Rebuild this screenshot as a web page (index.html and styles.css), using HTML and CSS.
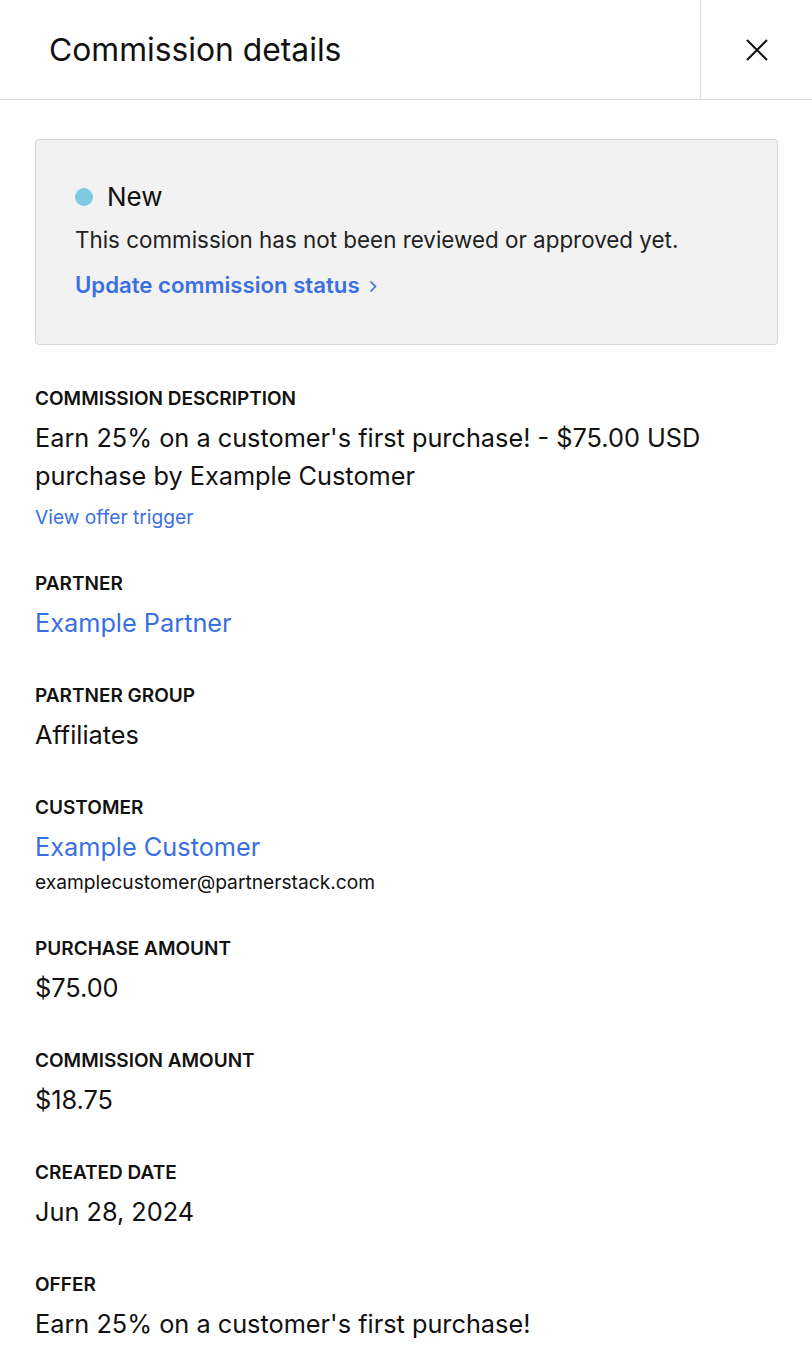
FILE: index.html
```html
<!DOCTYPE html>
<html lang="en">
<head>
<meta charset="utf-8">
<title>Commission details</title>
<link rel="stylesheet" href="styles.css">
</head>
<body>
<div class="panel">
  <header class="header">
    <h1 class="title">Commission details</h1>
    <button class="close" aria-label="Close">
      <svg width="22" height="22" viewBox="0 0 22 22"><path d="M1 1 L21 21 M21 1 L1 21" stroke="#111" stroke-width="2" fill="none"/></svg>
    </button>
  </header>
  <main class="content">
    <div class="status-card">
      <div class="status-row"><span class="dot"></span><span class="status-name">New</span></div>
      <p class="status-desc">This commission has not been reviewed or approved yet.</p>
      <a class="status-link" href="#">Update commission status
        <svg class="chev" width="8" height="13" viewBox="0 0 8 13"><path d="M1.5 1.5 L6.5 6.5 L1.5 11.5" stroke="#3a6fe2" stroke-width="1.6" fill="none"/></svg>
      </a>
    </div>

    <section class="field">
      <div class="label">COMMISSION DESCRIPTION</div>
      <div class="value">Earn 25% on a customer's first purchase! - $75.00 USD purchase by Example Customer</div>
      <a class="small-link" href="#">View offer trigger</a>
    </section>

    <section class="field">
      <div class="label">PARTNER</div>
      <a class="value link" href="#">Example Partner</a>
    </section>

    <section class="field">
      <div class="label">PARTNER GROUP</div>
      <div class="value">Affiliates</div>
    </section>

    <section class="field">
      <div class="label">CUSTOMER</div>
      <a class="value link" href="#">Example Customer</a>
      <div class="email">examplecustomer@partnerstack.com</div>
    </section>

    <section class="field">
      <div class="label">PURCHASE AMOUNT</div>
      <div class="value">$75.00</div>
    </section>

    <section class="field">
      <div class="label">COMMISSION AMOUNT</div>
      <div class="value">$18.75</div>
    </section>

    <section class="field">
      <div class="label">CREATED DATE</div>
      <div class="value">Jun 28, 2024</div>
    </section>

    <section class="field">
      <div class="label">OFFER</div>
      <div class="value">Earn 25% on a customer's first purchase!</div>
    </section>
  </main>
</div>
</body>
</html>
```
FILE: styles.css
```css
* { box-sizing: border-box; }
html, body { margin: 0; padding: 0; background: #fff; }
body {
  font-family: Inter, "Noto Sans", "Liberation Sans", sans-serif;
  color: #111;
}
.panel { width: 812px; min-height: 1366px; overflow: hidden; }
.header {
  display: flex;
  height: 100px;
  border-bottom: 1px solid #dcdcdc;
}
.title {
  flex: 1;
  margin: 0;
  padding-left: 49px;
  font-size: 31.8px;
  font-weight: 400;
  line-height: 99px;
  color: #111;
}
.close {
  width: 112px;
  border: 0;
  border-left: 1px solid #dcdcdc;
  background: #fff;
  padding: 0;
  display: flex;
  align-items: center;
  justify-content: center;
}
.content { padding: 39px 34px 0 35px; }
.status-card {
  background: #f2f2f2;
  border: 1px solid #d6d6d8;
  border-radius: 4px;
  padding: 41px 39px 45px;
  margin-bottom: 41px;
}
.status-row { display: flex; align-items: center; height: 32px; }
.dot {
  width: 18px; height: 18px; border-radius: 50%;
  background: #7ecae3;
  margin-right: 14px;
}
.status-name { font-size: 26px; line-height: 32px; }
.status-desc {
  margin: 13px 0 0;
  font-size: 22.4px;
  line-height: 28px;
  color: #222;
}
.status-link {
  display: inline-flex;
  align-items: center;
  margin-top: 17px;
  font-size: 22.2px;
  line-height: 28px;
  font-weight: 600;
  color: #3a6fe2;
  text-decoration: none;
}
.chev { margin-left: 9px; margin-top: 2px; }
.field { display: flex; flex-direction: column; align-items: flex-start; margin-bottom: 41px; }
.label {
  padding-top: 1px;
  font-size: 19px;
  line-height: 24px;
  font-weight: 600;
  color: #111;
}
.value {
  margin-top: 8px;
  font-size: 25.3px;
  line-height: 38px;
  color: #111;
}
.link { color: #3a6fe2; text-decoration: none; }
.small-link {
  margin-top: 10px;
  font-size: 19.2px;
  line-height: 25px;
  color: #3a6fe2;
  text-decoration: none;
}
.email {
  margin-top: 4px;
  font-size: 19.2px;
  line-height: 25px;
  color: #111;
}
```
